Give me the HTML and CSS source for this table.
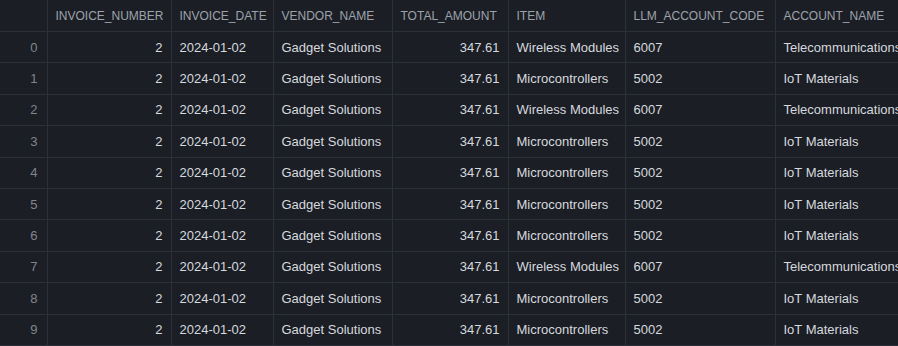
FILE: index.html
```html
<!DOCTYPE html>
<html>
<head>
<meta charset="utf-8">
<link rel="stylesheet" href="styles.css">
</head>
<body>
<div class="wrap">
<table class="grid">
<colgroup>
<col class="c-idx"><col class="c-num"><col class="c-date"><col class="c-vendor"><col class="c-amt"><col class="c-item"><col class="c-code"><col class="c-acct">
</colgroup>
<thead>
<tr><th></th><th>INVOICE_NUMBER</th><th>INVOICE_DATE</th><th>VENDOR_NAME</th><th>TOTAL_AMOUNT</th><th>ITEM</th><th>LLM_ACCOUNT_CODE</th><th>ACCOUNT_NAME</th></tr>
</thead>
<tbody>
<tr><td class="idx">0</td><td class="r">2</td><td>2024-01-02</td><td>Gadget Solutions</td><td class="r">347.61</td><td>Wireless Modules</td><td>6007</td><td>Telecommunications</td></tr>
<tr><td class="idx">1</td><td class="r">2</td><td>2024-01-02</td><td>Gadget Solutions</td><td class="r">347.61</td><td>Microcontrollers</td><td>5002</td><td>IoT Materials</td></tr>
<tr><td class="idx">2</td><td class="r">2</td><td>2024-01-02</td><td>Gadget Solutions</td><td class="r">347.61</td><td>Wireless Modules</td><td>6007</td><td>Telecommunications</td></tr>
<tr><td class="idx">3</td><td class="r">2</td><td>2024-01-02</td><td>Gadget Solutions</td><td class="r">347.61</td><td>Microcontrollers</td><td>5002</td><td>IoT Materials</td></tr>
<tr><td class="idx">4</td><td class="r">2</td><td>2024-01-02</td><td>Gadget Solutions</td><td class="r">347.61</td><td>Microcontrollers</td><td>5002</td><td>IoT Materials</td></tr>
<tr><td class="idx">5</td><td class="r">2</td><td>2024-01-02</td><td>Gadget Solutions</td><td class="r">347.61</td><td>Microcontrollers</td><td>5002</td><td>IoT Materials</td></tr>
<tr><td class="idx">6</td><td class="r">2</td><td>2024-01-02</td><td>Gadget Solutions</td><td class="r">347.61</td><td>Microcontrollers</td><td>5002</td><td>IoT Materials</td></tr>
<tr><td class="idx">7</td><td class="r">2</td><td>2024-01-02</td><td>Gadget Solutions</td><td class="r">347.61</td><td>Wireless Modules</td><td>6007</td><td>Telecommunications</td></tr>
<tr><td class="idx">8</td><td class="r">2</td><td>2024-01-02</td><td>Gadget Solutions</td><td class="r">347.61</td><td>Microcontrollers</td><td>5002</td><td>IoT Materials</td></tr>
<tr><td class="idx">9</td><td class="r">2</td><td>2024-01-02</td><td>Gadget Solutions</td><td class="r">347.61</td><td>Microcontrollers</td><td>5002</td><td>IoT Materials</td></tr>
</tbody>
</table>
</div>
</body>
</html>
```
FILE: styles.css
```css
html, body {
  margin: 0;
  padding: 0;
  background: #1b1e25;
  overflow: hidden;
}
.wrap {
  width: 898px;
  height: 346px;
  overflow: hidden;
}
.grid {
  border-collapse: collapse;
  table-layout: fixed;
  width: 1000px;
  font-family: "Liberation Sans", Arial, sans-serif;
  font-size: 13px;
  color: #d6d9de;
}
.c-idx { width: 47px; }
.c-num { width: 124px; }
.c-date { width: 102px; }
.c-vendor { width: 119px; }
.c-amt { width: 116px; }
.c-item { width: 117px; }
.c-code { width: 150px; }
.c-acct { width: 225px; }
th, td {
  border: 1px solid #2c3038;
  padding: 0 8px;
  white-space: nowrap;
  overflow: hidden;
  text-align: left;
}
tr > :first-child { border-left: none; }
thead tr th { border-top: none; }
th {
  height: 31px;
  font-weight: normal;
  font-size: 12px;
  color: #9ea3ab;
  text-align: left;
}
td {
  height: 30.4px;
}
td.r { text-align: right; }
td.idx {
  text-align: right;
  color: #80858d;
  padding-right: 9px;
}
```
